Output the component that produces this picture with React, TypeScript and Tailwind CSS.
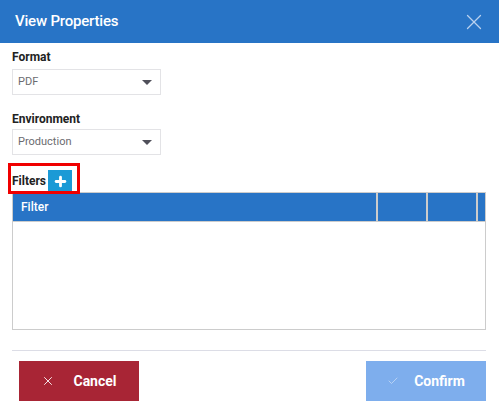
import { X, Check, Plus } from "lucide-react";

const font = { fontFamily: "Roboto, 'Liberation Sans', sans-serif" };

function Select({ value }: { value: string }) {
    return (
        <div className="flex items-center justify-between w-[149px] h-[26px] border border-[#e3e3e6] bg-white pl-[5px] pr-[8px]">
            <span className="text-[11px] text-[#6b6b70]">{value}</span>
            <span className="w-0 h-0 border-l-[5px] border-r-[5px] border-t-[5px] border-l-transparent border-r-transparent border-t-[#50505a]" />
        </div>
    );
}

export default function App() {
    return (
        <div className="w-[499px] h-[410px] bg-white flex flex-col" style={font}>
            {/* Header */}
            <div className="h-[43px] bg-[#2874c6] flex items-center justify-between pl-[15px] pr-[12px] shrink-0">
                <span className="text-white text-[15px] font-medium tracking-[-0.2px]">View Properties</span>
                <X className="w-[26px] h-[26px] text-[#b9d1ef]" strokeWidth={1.2} />
            </div>

            <div className="px-[12px] pt-[6px] flex flex-col">
                <label className="text-[12px] font-bold text-[#222] leading-[16px]">Format</label>
                <div className="mt-[4px]">
                    <Select value="PDF" />
                </div>

                <label className="text-[12px] font-bold text-[#222] leading-[16px] mt-[16px]">Environment</label>
                <div className="mt-[2px]">
                    <Select value="Production" />
                </div>

                {/* Filters */}
                <div className="relative flex items-center h-[22px] mt-[15px]">
                    <span className="text-[12px] font-bold text-[#222]">Filters</span>
                    <button className="ml-[2px] w-[24px] h-[22px] bg-[#1b9ad6] flex items-center justify-center">
                        <Plus className="w-[15px] h-[15px] text-white" strokeWidth={4.5} />
                    </button>
                    <div className="absolute left-[-4px] top-[-7px] w-[72px] h-[31px] border-[3px] border-[#f00000] pointer-events-none" />
                </div>

                {/* Table */}
                <div className="w-[474px] h-[138px] border border-[#cccccc] flex flex-col">
                    <div className="h-[29px] bg-[#2874c6] flex border-b border-[#cccccc]">
                        <div className="w-[365px] flex items-center pl-[8px] text-white text-[12px] font-medium border-r-2 border-[#cccccc]">
                            Filter
                        </div>
                        <div className="w-[50px] border-r-2 border-[#cccccc]" />
                        <div className="w-[50px] border-r-2 border-[#cccccc]" />
                        <div className="flex-1" />
                    </div>
                    <div className="flex-1" />
                </div>

                <div className="h-px bg-[#dcdde6] mt-[20px] w-[474px]" />

                {/* Footer buttons */}
                <div className="flex justify-between mt-[10px] pl-[7px] w-[474px]">
                    <button className="w-[120px] h-[40px] bg-[#a82535] flex items-center justify-center gap-[18px] text-white text-[14px] font-bold">
                        <X className="w-[14px] h-[14px]" strokeWidth={1.5} />
                        <span>Cancel</span>
                    </button>
                    <button className="w-[120px] h-[40px] bg-[#7eaeed] flex items-center justify-center gap-[15px] text-white text-[14px] font-bold">
                        <Check className="w-[12px] h-[12px] text-[#c9dcf6]" strokeWidth={1.5} />
                        <span>Confirm</span>
                    </button>
                </div>
            </div>
        </div>
    );
}
